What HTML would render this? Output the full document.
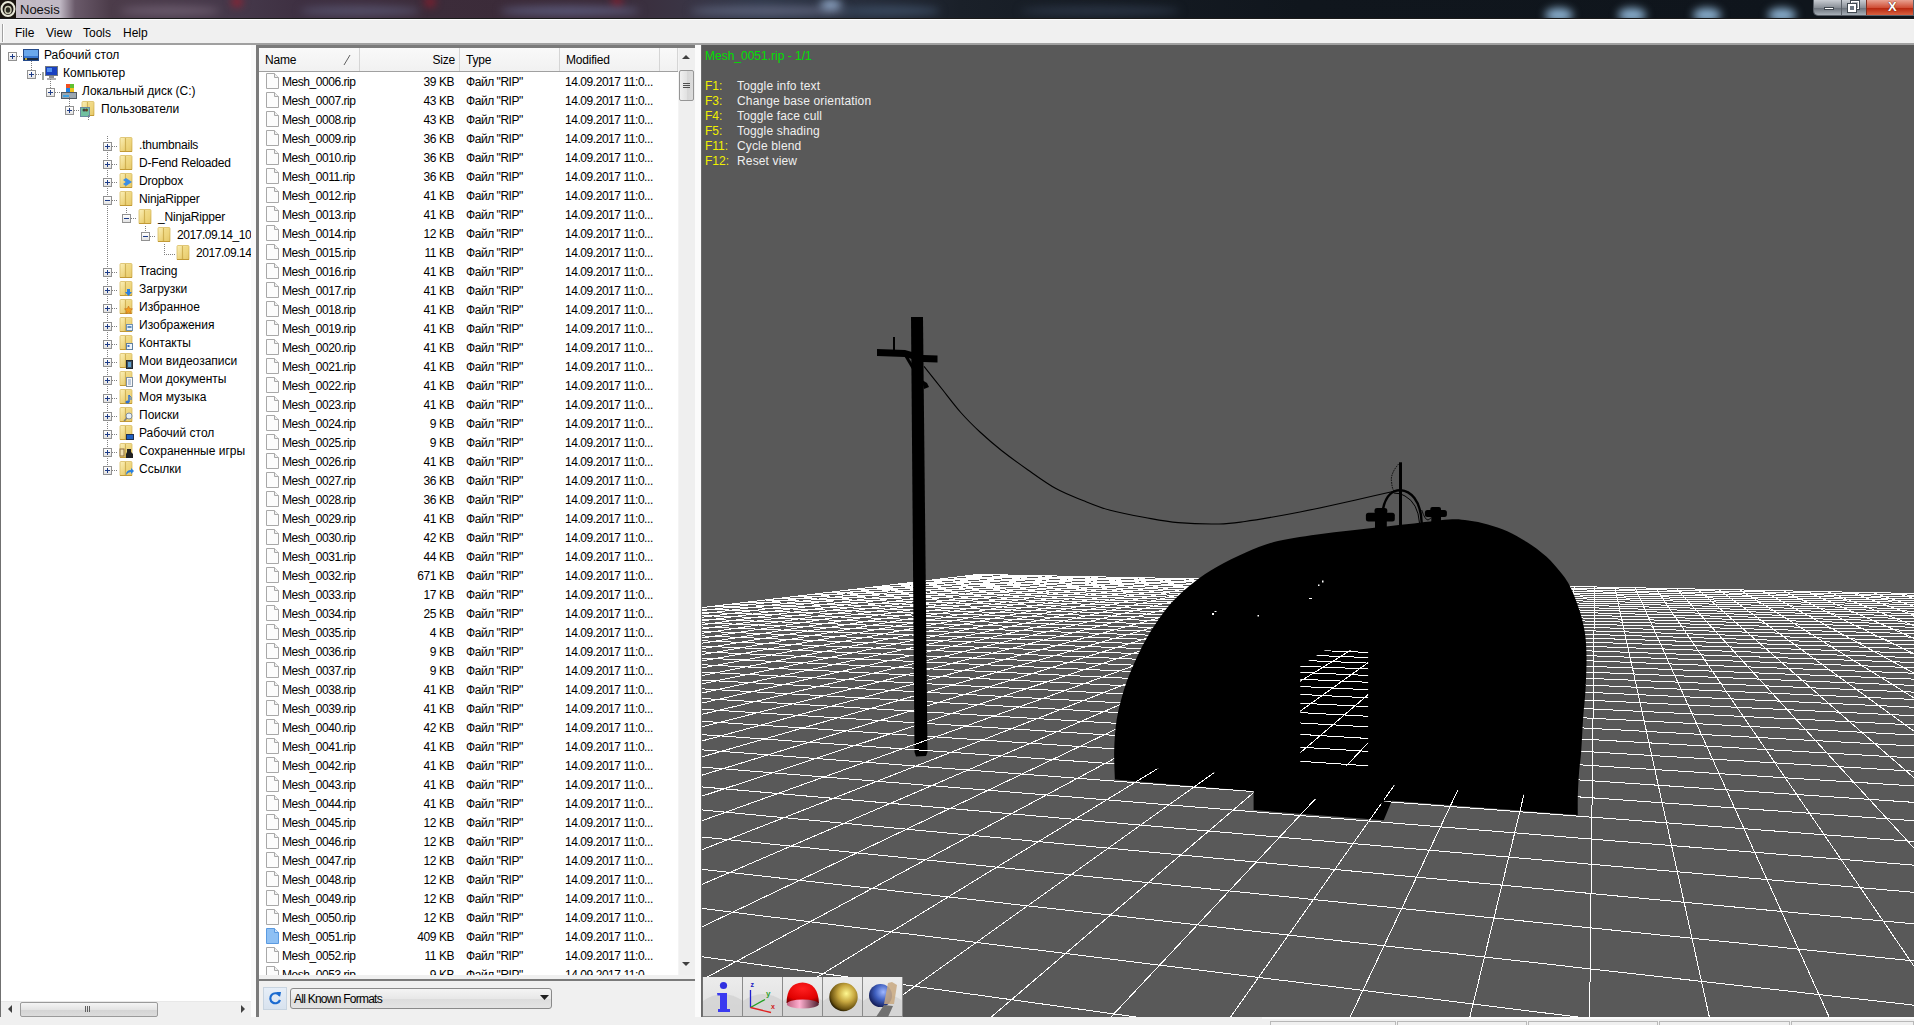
<!DOCTYPE html><html><head><meta charset="utf-8"><style>
*{margin:0;padding:0;box-sizing:border-box}
html,body{width:1914px;height:1025px;overflow:hidden;background:#f0f0f0;font-family:"Liberation Sans", sans-serif;}
.abs{position:absolute}
#title{left:0;top:0;width:1914px;height:19px;overflow:hidden;
background:linear-gradient(90deg,#1a1810 0px,#1a1810 15px,#c4bcc6 16px,#c0b8c4 60px,#6a5a6a 75px,#4c3c4a 110px,#45384a 240px,#3e3042 300px,#3c2c3a 430px,#3a2a38 600px,#3a3444 680px,#30384a 760px,#262c3a 860px,#1a2029 960px,#151b23 1100px,#10161d 1300px,#0f151c 1800px);}
.spot{position:absolute;border-radius:50%;filter:blur(4px)}
#menubar{left:0;top:19px;width:1914px;height:25px;background:#f0f0f0;border-top:1px solid #fbfbfb}
.menu{position:absolute;top:6px;font-size:12px;color:#000}
#tree{left:0;top:45px;width:256px;height:972px;background:#fff;border-left:1px solid #707070;overflow:hidden}
.ti{position:absolute;font-size:12px;color:#000;white-space:nowrap;line-height:14px;}
.pb{position:absolute;z-index:2;width:9px;height:9px;border:1px solid #919191;background:linear-gradient(#fff,#e3e3e3);}
.pb:before{content:"";position:absolute;left:1px;top:3px;width:5px;height:1px;background:#1d3b87}
.pb.p:after{content:"";position:absolute;left:3px;top:1px;width:1px;height:5px;background:#1d3b87}
.dv{position:absolute;width:1px;background-image:linear-gradient(#808080 50%,transparent 50%);background-size:1px 2px}
.dh{position:absolute;height:1px;background-image:linear-gradient(90deg,#808080 50%,transparent 50%);background-size:2px 1px}
#list{left:256px;top:45px;width:441px;height:936px;background:#fff;border:3px solid #7a7a7a;border-right:none;border-bottom:none;overflow:hidden}
.hd{position:absolute;top:0;height:24px;background:linear-gradient(#f7f7f7,#f0f0f0);border-bottom:1px solid #a0a0a0;font-size:12px;color:#000}
.hd span{position:absolute;top:6px}
.row{position:absolute;left:0;width:419px;height:19px;font-size:12px;color:#000;letter-spacing:-0.45px;white-space:nowrap}
.row span{position:absolute;top:3px}
.fi{position:absolute;left:7px;top:1px;width:13px;height:16px}
#view{left:702px;overflow:visible;top:45px;width:1212px;height:972px;background:#595959;overflow:hidden}
</style></head><body>

<div id="title" class="abs">
<div class="spot" style="left:232px;top:-2px;width:10px;height:8px;background:#b01828"></div>
<div class="spot" style="left:425px;top:-2px;width:10px;height:8px;background:#a01828"></div>
<div class="spot" style="left:612px;top:-2px;width:10px;height:8px;background:#a01828"></div>
<div class="spot" style="left:120px;top:6px;width:100px;height:10px;background:#6a5a6c"></div>
<div class="spot" style="left:300px;top:6px;width:120px;height:10px;background:#55506a"></div>
<div class="spot" style="left:500px;top:6px;width:140px;height:10px;background:#5a5878"></div>
<div class="spot" style="left:690px;top:6px;width:160px;height:10px;background:#5a6078"></div>
<div class="spot" style="left:820px;top:0px;width:22px;height:10px;background:#90a8c8"></div>
<div class="spot" style="left:840px;top:6px;width:100px;height:10px;background:#3a4a60"></div>
<div class="spot" style="left:1020px;top:6px;width:160px;height:10px;background:#2a3444"></div>
<div class="spot" style="left:1545px;top:8px;width:28px;height:14px;background:#8ab0d0"></div>
<div class="spot" style="left:1618px;top:8px;width:28px;height:14px;background:#8ab0d0"></div>
<div class="spot" style="left:1693px;top:8px;width:28px;height:14px;background:#8ab0d0"></div>
<div class="spot" style="left:1768px;top:8px;width:28px;height:14px;background:#8ab0d0"></div>
<div class="abs" style="left:0;top:0;width:16px;height:18px;background:#1a1510"></div>
<svg class="abs" style="left:0;top:1px" width="16" height="16"><ellipse cx="8" cy="8" rx="6.5" ry="7" fill="none" stroke="#e8e8d8" stroke-width="2"/><ellipse cx="8" cy="9" rx="3" ry="3.5" fill="#2a2a20" stroke="#c8c8b0" stroke-width="1.5"/></svg>
<div class="abs" style="left:20px;top:2px;font-size:13px;color:#101010">Noesis</div>
<div class="abs" style="left:1813px;top:0;width:101px;height:16px;border-radius:0 0 0 5px;overflow:hidden;border:1px solid #5a6068;border-top:none">
<div class="abs" style="left:0;top:0;width:27px;height:15px;background:linear-gradient(#c8ccd2,#8a9098 50%,#6c737c 55%,#a8b0b8)"></div>
<div class="abs" style="left:27px;top:0;width:25px;height:15px;background:linear-gradient(#c8ccd2,#8a9098 50%,#6c737c 55%,#a8b0b8);border-left:1px solid #5a6068"></div>
<div class="abs" style="left:52px;top:0;width:49px;height:15px;background:linear-gradient(#e8a090,#d05038 50%,#b82810 55%,#d86040);border-left:1px solid #803020"></div>
<div class="abs" style="left:10px;top:7px;width:10px;height:3px;background:#fff;border:1px solid #404850"></div>
<div class="abs" style="left:37px;top:1px;width:8px;height:8px;border:1px solid #fff;box-shadow:0 0 0 1px #404850"></div>
<div class="abs" style="left:34px;top:4px;width:8px;height:8px;border:2px solid #fff;background:#6a7480;box-shadow:0 0 0 1px #404850"></div>
<div class="abs" style="left:74px;top:-1px;font-size:13px;font-weight:bold;color:#fff;text-shadow:0 0 1px #602010,0 0 1px #602010">X</div>
</div>
<div class="abs" style="left:0;top:18px;width:1914px;height:1px;background:#1a1a1a"></div>
</div>
<div id="menubar" class="abs">
<div class="abs" style="left:2px;top:4px;width:2px;height:18px;border-left:1px solid #a0a0a0;border-right:1px solid #fff"></div>
<div class="menu" style="left:15px">File</div>
<div class="menu" style="left:46px">View</div>
<div class="menu" style="left:83px">Tools</div>
<div class="menu" style="left:123px">Help</div>
</div>
<div class="abs" style="left:0;top:43px;width:1914px;height:2px;background:#a0a0a0"></div>
<div id="tree" class="abs">
<div class="pb p" style="left:7px;top:7px"></div>
<div class="dh" style="left:16px;top:11px;width:6px"></div>
<div class="abs" style="left:22px;top:2px;width:16px;height:16px"><svg width="16" height="16"><rect x="0.5" y="2.5" width="15" height="11" fill="#3a78d0" stroke="#244a8a"/><rect x="1" y="3" width="14" height="6" fill="#6aa8ec"/><rect x="1" y="11" width="14" height="2" fill="#1a2a40"/><circle cx="3" cy="12" r="1" fill="#f0d040"/></svg></div>
<div class="ti" style="left:43px;top:3px;letter-spacing:0">Рабочий стол</div>
<div class="pb p" style="left:26px;top:25px"></div>
<div class="dh" style="left:35px;top:29px;width:6px"></div>
<div class="abs" style="left:41px;top:20px;width:16px;height:16px"><svg width="16" height="16"><rect x="3.5" y="1.5" width="12" height="9" fill="#1840c0" stroke="#707880"/><rect x="5" y="3" width="5" height="4" fill="#5090f0"/><rect x="7" y="11" width="5" height="2" fill="#909090"/><rect x="5" y="13" width="9" height="2" fill="#b0b0b0"/><rect x="0" y="7" width="2" height="8" fill="#a0a8a0"/></svg></div>
<div class="ti" style="left:62px;top:21px;letter-spacing:0">Компьютер</div>
<div class="pb p" style="left:45px;top:43px"></div>
<div class="dh" style="left:54px;top:47px;width:6px"></div>
<div class="abs" style="left:60px;top:38px;width:16px;height:16px"><svg width="16" height="16"><rect x="0.5" y="9.5" width="15" height="6" fill="#9aa6b0" stroke="#505a64"/><rect x="2" y="12" width="6" height="2" fill="#40a0e0"/><rect x="5" y="1" width="4" height="4" fill="#f05020"/><rect x="9" y="1" width="4" height="4" fill="#60c030"/><rect x="5" y="5" width="4" height="4" fill="#2080e0"/><rect x="9" y="5" width="4" height="4" fill="#f0c020"/></svg></div>
<div class="ti" style="left:81px;top:39px;letter-spacing:0">Локальный диск (C:)</div>
<div class="pb p" style="left:64px;top:61px"></div>
<div class="dh" style="left:73px;top:65px;width:6px"></div>
<div class="abs" style="left:79px;top:56px;width:16px;height:16px"><svg width="16" height="16" viewBox="0 0 16 16"><defs><linearGradient id="fg" x1="0" y1="0" x2="1" y2="1"><stop offset="0" stop-color="#fbf0b8"/><stop offset="0.6" stop-color="#ecd27a"/><stop offset="1" stop-color="#d4ae48"/></linearGradient></defs><path d="M2 1.5Q2 0.5 3 0.5H13Q14 0.5 14 1.5V14.5H2z" fill="url(#fg)" stroke="#d9bc62" stroke-width="0.8"/><path d="M7.5 1V14.5" stroke="#c9a848" stroke-width="1.2" opacity="0.8"/><path d="M8.5 2H13V14H8.5z" fill="#f0d880" opacity="0.6"/><path d="M2 14.5H14" stroke="#c29a36" stroke-width="1"/><rect x="0.5" y="6.5" width="9" height="9" fill="#70c0a0" stroke="#6a8aa0"/><circle cx="4" cy="9" r="1.5" fill="#404040"/><circle cx="6.5" cy="9" r="1.5" fill="#604020"/></svg></div>
<div class="ti" style="left:100px;top:57px;letter-spacing:0">Пользователи</div>
<div class="pb p" style="left:102px;top:97px"></div>
<div class="dh" style="left:111px;top:101px;width:6px"></div>
<div class="abs" style="left:117px;top:92px;width:16px;height:16px"><svg width="16" height="16" viewBox="0 0 16 16"><defs><linearGradient id="fg" x1="0" y1="0" x2="1" y2="1"><stop offset="0" stop-color="#fbf0b8"/><stop offset="0.6" stop-color="#ecd27a"/><stop offset="1" stop-color="#d4ae48"/></linearGradient></defs><path d="M2 1.5Q2 0.5 3 0.5H13Q14 0.5 14 1.5V14.5H2z" fill="url(#fg)" stroke="#d9bc62" stroke-width="0.8"/><path d="M7.5 1V14.5" stroke="#c9a848" stroke-width="1.2" opacity="0.8"/><path d="M8.5 2H13V14H8.5z" fill="#f0d880" opacity="0.6"/><path d="M2 14.5H14" stroke="#c29a36" stroke-width="1"/></svg></div>
<div class="ti" style="left:138px;top:93px;letter-spacing:-0.2px">.thumbnails</div>
<div class="pb p" style="left:102px;top:115px"></div>
<div class="dh" style="left:111px;top:119px;width:6px"></div>
<div class="abs" style="left:117px;top:110px;width:16px;height:16px"><svg width="16" height="16" viewBox="0 0 16 16"><defs><linearGradient id="fg" x1="0" y1="0" x2="1" y2="1"><stop offset="0" stop-color="#fbf0b8"/><stop offset="0.6" stop-color="#ecd27a"/><stop offset="1" stop-color="#d4ae48"/></linearGradient></defs><path d="M2 1.5Q2 0.5 3 0.5H13Q14 0.5 14 1.5V14.5H2z" fill="url(#fg)" stroke="#d9bc62" stroke-width="0.8"/><path d="M7.5 1V14.5" stroke="#c9a848" stroke-width="1.2" opacity="0.8"/><path d="M8.5 2H13V14H8.5z" fill="#f0d880" opacity="0.6"/><path d="M2 14.5H14" stroke="#c29a36" stroke-width="1"/></svg></div>
<div class="ti" style="left:138px;top:111px;letter-spacing:-0.2px">D-Fend Reloaded</div>
<div class="pb p" style="left:102px;top:133px"></div>
<div class="dh" style="left:111px;top:137px;width:6px"></div>
<div class="abs" style="left:117px;top:128px;width:16px;height:16px"><svg width="16" height="16" viewBox="0 0 16 16"><defs><linearGradient id="fg" x1="0" y1="0" x2="1" y2="1"><stop offset="0" stop-color="#fbf0b8"/><stop offset="0.6" stop-color="#ecd27a"/><stop offset="1" stop-color="#d4ae48"/></linearGradient></defs><path d="M2 1.5Q2 0.5 3 0.5H13Q14 0.5 14 1.5V14.5H2z" fill="url(#fg)" stroke="#d9bc62" stroke-width="0.8"/><path d="M7.5 1V14.5" stroke="#c9a848" stroke-width="1.2" opacity="0.8"/><path d="M8.5 2H13V14H8.5z" fill="#f0d880" opacity="0.6"/><path d="M2 14.5H14" stroke="#c29a36" stroke-width="1"/><path d="M5 7l3-2 3 2-3 2zM11 7l3 2-3 2-3-2zM5 11l3-2 3 2-3 2z" fill="#3a8ee8"/></svg></div>
<div class="ti" style="left:138px;top:129px;letter-spacing:-0.2px">Dropbox</div>
<div class="pb " style="left:102px;top:151px"></div>
<div class="dh" style="left:111px;top:155px;width:6px"></div>
<div class="abs" style="left:117px;top:146px;width:16px;height:16px"><svg width="16" height="16" viewBox="0 0 16 16"><defs><linearGradient id="fg" x1="0" y1="0" x2="1" y2="1"><stop offset="0" stop-color="#fbf0b8"/><stop offset="0.6" stop-color="#ecd27a"/><stop offset="1" stop-color="#d4ae48"/></linearGradient></defs><path d="M2 1.5Q2 0.5 3 0.5H13Q14 0.5 14 1.5V14.5H2z" fill="url(#fg)" stroke="#d9bc62" stroke-width="0.8"/><path d="M7.5 1V14.5" stroke="#c9a848" stroke-width="1.2" opacity="0.8"/><path d="M8.5 2H13V14H8.5z" fill="#f0d880" opacity="0.6"/><path d="M2 14.5H14" stroke="#c29a36" stroke-width="1"/></svg></div>
<div class="ti" style="left:138px;top:147px;letter-spacing:-0.2px">NinjaRipper</div>
<div class="pb " style="left:121px;top:169px"></div>
<div class="dh" style="left:130px;top:173px;width:6px"></div>
<div class="abs" style="left:136px;top:164px;width:16px;height:16px"><svg width="16" height="16" viewBox="0 0 16 16"><defs><linearGradient id="fg" x1="0" y1="0" x2="1" y2="1"><stop offset="0" stop-color="#fbf0b8"/><stop offset="0.6" stop-color="#ecd27a"/><stop offset="1" stop-color="#d4ae48"/></linearGradient></defs><path d="M2 1.5Q2 0.5 3 0.5H13Q14 0.5 14 1.5V14.5H2z" fill="url(#fg)" stroke="#d9bc62" stroke-width="0.8"/><path d="M7.5 1V14.5" stroke="#c9a848" stroke-width="1.2" opacity="0.8"/><path d="M8.5 2H13V14H8.5z" fill="#f0d880" opacity="0.6"/><path d="M2 14.5H14" stroke="#c29a36" stroke-width="1"/></svg></div>
<div class="ti" style="left:157px;top:165px;letter-spacing:-0.2px">_NinjaRipper</div>
<div class="pb " style="left:140px;top:187px"></div>
<div class="dh" style="left:149px;top:191px;width:6px"></div>
<div class="abs" style="left:155px;top:182px;width:16px;height:16px"><svg width="16" height="16" viewBox="0 0 16 16"><defs><linearGradient id="fg" x1="0" y1="0" x2="1" y2="1"><stop offset="0" stop-color="#fbf0b8"/><stop offset="0.6" stop-color="#ecd27a"/><stop offset="1" stop-color="#d4ae48"/></linearGradient></defs><path d="M2 1.5Q2 0.5 3 0.5H13Q14 0.5 14 1.5V14.5H2z" fill="url(#fg)" stroke="#d9bc62" stroke-width="0.8"/><path d="M7.5 1V14.5" stroke="#c9a848" stroke-width="1.2" opacity="0.8"/><path d="M8.5 2H13V14H8.5z" fill="#f0d880" opacity="0.6"/><path d="M2 14.5H14" stroke="#c29a36" stroke-width="1"/></svg></div>
<div class="ti" style="left:176px;top:183px;letter-spacing:-0.45px">2017.09.14_10.</div>
<div class="dh" style="left:163px;top:209px;width:11px"></div>
<div class="abs" style="left:174px;top:200px;width:16px;height:16px"><svg width="16" height="16" viewBox="0 0 16 16"><defs><linearGradient id="fg" x1="0" y1="0" x2="1" y2="1"><stop offset="0" stop-color="#fbf0b8"/><stop offset="0.6" stop-color="#ecd27a"/><stop offset="1" stop-color="#d4ae48"/></linearGradient></defs><path d="M2 1.5Q2 0.5 3 0.5H13Q14 0.5 14 1.5V14.5H2z" fill="url(#fg)" stroke="#d9bc62" stroke-width="0.8"/><path d="M7.5 1V14.5" stroke="#c9a848" stroke-width="1.2" opacity="0.8"/><path d="M8.5 2H13V14H8.5z" fill="#f0d880" opacity="0.6"/><path d="M2 14.5H14" stroke="#c29a36" stroke-width="1"/></svg></div>
<div class="ti" style="left:195px;top:201px;letter-spacing:-0.45px">2017.09.14_</div>
<div class="pb p" style="left:102px;top:223px"></div>
<div class="dh" style="left:111px;top:227px;width:6px"></div>
<div class="abs" style="left:117px;top:218px;width:16px;height:16px"><svg width="16" height="16" viewBox="0 0 16 16"><defs><linearGradient id="fg" x1="0" y1="0" x2="1" y2="1"><stop offset="0" stop-color="#fbf0b8"/><stop offset="0.6" stop-color="#ecd27a"/><stop offset="1" stop-color="#d4ae48"/></linearGradient></defs><path d="M2 1.5Q2 0.5 3 0.5H13Q14 0.5 14 1.5V14.5H2z" fill="url(#fg)" stroke="#d9bc62" stroke-width="0.8"/><path d="M7.5 1V14.5" stroke="#c9a848" stroke-width="1.2" opacity="0.8"/><path d="M8.5 2H13V14H8.5z" fill="#f0d880" opacity="0.6"/><path d="M2 14.5H14" stroke="#c29a36" stroke-width="1"/></svg></div>
<div class="ti" style="left:138px;top:219px;letter-spacing:-0.2px">Tracing</div>
<div class="pb p" style="left:102px;top:241px"></div>
<div class="dh" style="left:111px;top:245px;width:6px"></div>
<div class="abs" style="left:117px;top:236px;width:16px;height:16px"><svg width="16" height="16" viewBox="0 0 16 16"><defs><linearGradient id="fg" x1="0" y1="0" x2="1" y2="1"><stop offset="0" stop-color="#fbf0b8"/><stop offset="0.6" stop-color="#ecd27a"/><stop offset="1" stop-color="#d4ae48"/></linearGradient></defs><path d="M2 1.5Q2 0.5 3 0.5H13Q14 0.5 14 1.5V14.5H2z" fill="url(#fg)" stroke="#d9bc62" stroke-width="0.8"/><path d="M7.5 1V14.5" stroke="#c9a848" stroke-width="1.2" opacity="0.8"/><path d="M8.5 2H13V14H8.5z" fill="#f0d880" opacity="0.6"/><path d="M2 14.5H14" stroke="#c29a36" stroke-width="1"/><path d="M9 8h3v3h2l-3.5 4-3.5-4h2z" fill="#2a80e0"/></svg></div>
<div class="ti" style="left:138px;top:237px;letter-spacing:0">Загрузки</div>
<div class="pb p" style="left:102px;top:259px"></div>
<div class="dh" style="left:111px;top:263px;width:6px"></div>
<div class="abs" style="left:117px;top:254px;width:16px;height:16px"><svg width="16" height="16" viewBox="0 0 16 16"><defs><linearGradient id="fg" x1="0" y1="0" x2="1" y2="1"><stop offset="0" stop-color="#fbf0b8"/><stop offset="0.6" stop-color="#ecd27a"/><stop offset="1" stop-color="#d4ae48"/></linearGradient></defs><path d="M2 1.5Q2 0.5 3 0.5H13Q14 0.5 14 1.5V14.5H2z" fill="url(#fg)" stroke="#d9bc62" stroke-width="0.8"/><path d="M7.5 1V14.5" stroke="#c9a848" stroke-width="1.2" opacity="0.8"/><path d="M8.5 2H13V14H8.5z" fill="#f0d880" opacity="0.6"/><path d="M2 14.5H14" stroke="#c29a36" stroke-width="1"/><path d="M10.5 7l1.2 2.6 2.8.3-2.1 1.9.6 2.8-2.5-1.4-2.5 1.4.6-2.8-2.1-1.9 2.8-.3z" fill="#f0a020" stroke="#c06010" stroke-width="0.5"/></svg></div>
<div class="ti" style="left:138px;top:255px;letter-spacing:0">Избранное</div>
<div class="pb p" style="left:102px;top:277px"></div>
<div class="dh" style="left:111px;top:281px;width:6px"></div>
<div class="abs" style="left:117px;top:272px;width:16px;height:16px"><svg width="16" height="16" viewBox="0 0 16 16"><defs><linearGradient id="fg" x1="0" y1="0" x2="1" y2="1"><stop offset="0" stop-color="#fbf0b8"/><stop offset="0.6" stop-color="#ecd27a"/><stop offset="1" stop-color="#d4ae48"/></linearGradient></defs><path d="M2 1.5Q2 0.5 3 0.5H13Q14 0.5 14 1.5V14.5H2z" fill="url(#fg)" stroke="#d9bc62" stroke-width="0.8"/><path d="M7.5 1V14.5" stroke="#c9a848" stroke-width="1.2" opacity="0.8"/><path d="M8.5 2H13V14H8.5z" fill="#f0d880" opacity="0.6"/><path d="M2 14.5H14" stroke="#c29a36" stroke-width="1"/><rect x="8.5" y="7.5" width="6" height="6" fill="#e8f0f8" stroke="#7090b0"/><rect x="9.5" y="9" width="4" height="2" fill="#6090c0"/></svg></div>
<div class="ti" style="left:138px;top:273px;letter-spacing:0">Изображения</div>
<div class="pb p" style="left:102px;top:295px"></div>
<div class="dh" style="left:111px;top:299px;width:6px"></div>
<div class="abs" style="left:117px;top:290px;width:16px;height:16px"><svg width="16" height="16" viewBox="0 0 16 16"><defs><linearGradient id="fg" x1="0" y1="0" x2="1" y2="1"><stop offset="0" stop-color="#fbf0b8"/><stop offset="0.6" stop-color="#ecd27a"/><stop offset="1" stop-color="#d4ae48"/></linearGradient></defs><path d="M2 1.5Q2 0.5 3 0.5H13Q14 0.5 14 1.5V14.5H2z" fill="url(#fg)" stroke="#d9bc62" stroke-width="0.8"/><path d="M7.5 1V14.5" stroke="#c9a848" stroke-width="1.2" opacity="0.8"/><path d="M8.5 2H13V14H8.5z" fill="#f0d880" opacity="0.6"/><path d="M2 14.5H14" stroke="#c29a36" stroke-width="1"/><rect x="8.5" y="8.5" width="6" height="6" fill="#f0f4f8" stroke="#6080a0"/><rect x="9.5" y="10" width="2" height="2" fill="#4070c0"/></svg></div>
<div class="ti" style="left:138px;top:291px;letter-spacing:0">Контакты</div>
<div class="pb p" style="left:102px;top:313px"></div>
<div class="dh" style="left:111px;top:317px;width:6px"></div>
<div class="abs" style="left:117px;top:308px;width:16px;height:16px"><svg width="16" height="16" viewBox="0 0 16 16"><defs><linearGradient id="fg" x1="0" y1="0" x2="1" y2="1"><stop offset="0" stop-color="#fbf0b8"/><stop offset="0.6" stop-color="#ecd27a"/><stop offset="1" stop-color="#d4ae48"/></linearGradient></defs><path d="M2 1.5Q2 0.5 3 0.5H13Q14 0.5 14 1.5V14.5H2z" fill="url(#fg)" stroke="#d9bc62" stroke-width="0.8"/><path d="M7.5 1V14.5" stroke="#c9a848" stroke-width="1.2" opacity="0.8"/><path d="M8.5 2H13V14H8.5z" fill="#f0d880" opacity="0.6"/><path d="M2 14.5H14" stroke="#c29a36" stroke-width="1"/><rect x="8.5" y="7.5" width="6" height="8" fill="#405060" stroke="#202830"/><rect x="10" y="9" width="3" height="5" fill="#60a0d0"/></svg></div>
<div class="ti" style="left:138px;top:309px;letter-spacing:0">Мои видеозаписи</div>
<div class="pb p" style="left:102px;top:331px"></div>
<div class="dh" style="left:111px;top:335px;width:6px"></div>
<div class="abs" style="left:117px;top:326px;width:16px;height:16px"><svg width="16" height="16" viewBox="0 0 16 16"><defs><linearGradient id="fg" x1="0" y1="0" x2="1" y2="1"><stop offset="0" stop-color="#fbf0b8"/><stop offset="0.6" stop-color="#ecd27a"/><stop offset="1" stop-color="#d4ae48"/></linearGradient></defs><path d="M2 1.5Q2 0.5 3 0.5H13Q14 0.5 14 1.5V14.5H2z" fill="url(#fg)" stroke="#d9bc62" stroke-width="0.8"/><path d="M7.5 1V14.5" stroke="#c9a848" stroke-width="1.2" opacity="0.8"/><path d="M8.5 2H13V14H8.5z" fill="#f0d880" opacity="0.6"/><path d="M2 14.5H14" stroke="#c29a36" stroke-width="1"/><rect x="8.5" y="6.5" width="6" height="9" fill="#f8f8f8" stroke="#8090a0"/><path d="M10 9h3M10 11h3M10 13h3" stroke="#6080b0" stroke-width="0.8"/></svg></div>
<div class="ti" style="left:138px;top:327px;letter-spacing:0">Мои документы</div>
<div class="pb p" style="left:102px;top:349px"></div>
<div class="dh" style="left:111px;top:353px;width:6px"></div>
<div class="abs" style="left:117px;top:344px;width:16px;height:16px"><svg width="16" height="16" viewBox="0 0 16 16"><defs><linearGradient id="fg" x1="0" y1="0" x2="1" y2="1"><stop offset="0" stop-color="#fbf0b8"/><stop offset="0.6" stop-color="#ecd27a"/><stop offset="1" stop-color="#d4ae48"/></linearGradient></defs><path d="M2 1.5Q2 0.5 3 0.5H13Q14 0.5 14 1.5V14.5H2z" fill="url(#fg)" stroke="#d9bc62" stroke-width="0.8"/><path d="M7.5 1V14.5" stroke="#c9a848" stroke-width="1.2" opacity="0.8"/><path d="M8.5 2H13V14H8.5z" fill="#f0d880" opacity="0.6"/><path d="M2 14.5H14" stroke="#c29a36" stroke-width="1"/><path d="M11 6v7" stroke="#3070d0" stroke-width="1.5"/><ellipse cx="9.5" cy="13" rx="2" ry="1.5" fill="#3070d0"/><path d="M11 6q3 2 2 5" stroke="#3070d0" fill="none"/></svg></div>
<div class="ti" style="left:138px;top:345px;letter-spacing:0">Моя музыка</div>
<div class="pb p" style="left:102px;top:367px"></div>
<div class="dh" style="left:111px;top:371px;width:6px"></div>
<div class="abs" style="left:117px;top:362px;width:16px;height:16px"><svg width="16" height="16" viewBox="0 0 16 16"><defs><linearGradient id="fg" x1="0" y1="0" x2="1" y2="1"><stop offset="0" stop-color="#fbf0b8"/><stop offset="0.6" stop-color="#ecd27a"/><stop offset="1" stop-color="#d4ae48"/></linearGradient></defs><path d="M2 1.5Q2 0.5 3 0.5H13Q14 0.5 14 1.5V14.5H2z" fill="url(#fg)" stroke="#d9bc62" stroke-width="0.8"/><path d="M7.5 1V14.5" stroke="#c9a848" stroke-width="1.2" opacity="0.8"/><path d="M8.5 2H13V14H8.5z" fill="#f0d880" opacity="0.6"/><path d="M2 14.5H14" stroke="#c29a36" stroke-width="1"/><circle cx="11" cy="9" r="3" fill="#e8f0f8" stroke="#8090a0"/><path d="M9 11l-3 3" stroke="#808080" stroke-width="1.5"/></svg></div>
<div class="ti" style="left:138px;top:363px;letter-spacing:0">Поиски</div>
<div class="pb p" style="left:102px;top:385px"></div>
<div class="dh" style="left:111px;top:389px;width:6px"></div>
<div class="abs" style="left:117px;top:380px;width:16px;height:16px"><svg width="16" height="16" viewBox="0 0 16 16"><defs><linearGradient id="fg" x1="0" y1="0" x2="1" y2="1"><stop offset="0" stop-color="#fbf0b8"/><stop offset="0.6" stop-color="#ecd27a"/><stop offset="1" stop-color="#d4ae48"/></linearGradient></defs><path d="M2 1.5Q2 0.5 3 0.5H13Q14 0.5 14 1.5V14.5H2z" fill="url(#fg)" stroke="#d9bc62" stroke-width="0.8"/><path d="M7.5 1V14.5" stroke="#c9a848" stroke-width="1.2" opacity="0.8"/><path d="M8.5 2H13V14H8.5z" fill="#f0d880" opacity="0.6"/><path d="M2 14.5H14" stroke="#c29a36" stroke-width="1"/><rect x="8.5" y="9.5" width="7" height="5" fill="#2060c0" stroke="#203050"/></svg></div>
<div class="ti" style="left:138px;top:381px;letter-spacing:0">Рабочий стол</div>
<div class="pb p" style="left:102px;top:403px"></div>
<div class="dh" style="left:111px;top:407px;width:6px"></div>
<div class="abs" style="left:117px;top:398px;width:16px;height:16px"><svg width="16" height="16" viewBox="0 0 16 16"><defs><linearGradient id="fg" x1="0" y1="0" x2="1" y2="1"><stop offset="0" stop-color="#fbf0b8"/><stop offset="0.6" stop-color="#ecd27a"/><stop offset="1" stop-color="#d4ae48"/></linearGradient></defs><path d="M2 1.5Q2 0.5 3 0.5H13Q14 0.5 14 1.5V14.5H2z" fill="url(#fg)" stroke="#d9bc62" stroke-width="0.8"/><path d="M7.5 1V14.5" stroke="#c9a848" stroke-width="1.2" opacity="0.8"/><path d="M8.5 2H13V14H8.5z" fill="#f0d880" opacity="0.6"/><path d="M2 14.5H14" stroke="#c29a36" stroke-width="1"/><path d="M9 6h4v3l2 2v4H8v-4l1-2z" fill="#202020"/><rect x="2" y="6" width="4" height="7" fill="#f0e0b0" stroke="#907040"/></svg></div>
<div class="ti" style="left:138px;top:399px;letter-spacing:0">Сохраненные игры</div>
<div class="pb p" style="left:102px;top:421px"></div>
<div class="dh" style="left:111px;top:425px;width:6px"></div>
<div class="abs" style="left:117px;top:416px;width:16px;height:16px"><svg width="16" height="16" viewBox="0 0 16 16"><defs><linearGradient id="fg" x1="0" y1="0" x2="1" y2="1"><stop offset="0" stop-color="#fbf0b8"/><stop offset="0.6" stop-color="#ecd27a"/><stop offset="1" stop-color="#d4ae48"/></linearGradient></defs><path d="M2 1.5Q2 0.5 3 0.5H13Q14 0.5 14 1.5V14.5H2z" fill="url(#fg)" stroke="#d9bc62" stroke-width="0.8"/><path d="M7.5 1V14.5" stroke="#c9a848" stroke-width="1.2" opacity="0.8"/><path d="M8.5 2H13V14H8.5z" fill="#f0d880" opacity="0.6"/><path d="M2 14.5H14" stroke="#c29a36" stroke-width="1"/><path d="M8 14q0-5 5-5v-2l3 3-3 3v-2q-3 0-5 3z" fill="#2a80e0"/></svg></div>
<div class="ti" style="left:138px;top:417px;letter-spacing:0">Ссылки</div>
<div class="dv" style="left:30px;top:16px;height:9px"></div>
<div class="dv" style="left:49px;top:34px;height:9px"></div>
<div class="dv" style="left:68px;top:52px;height:9px"></div>
<div class="dv" style="left:87px;top:70px;height:6px"></div>
<div class="dv" style="left:106px;top:91px;height:334px"></div>
<div class="dv" style="left:125px;top:163px;height:10px"></div>
<div class="dv" style="left:144px;top:181px;height:10px"></div>
<div class="dv" style="left:163px;top:199px;height:10px"></div>
<div class="abs" style="left:0;top:956px;width:255px;height:17px;background:#f0f0f0;border-top:1px solid #e8e8e8"></div>
<div class="abs" style="left:19px;top:957px;width:138px;height:15px;border:1px solid #9a9a9a;border-radius:2px;background:linear-gradient(#f4f4f4,#e4e4e4 50%,#d4d4d4 51%,#dcdcdc)"></div>
<div class="abs" style="left:84px;top:961px;width:1px;height:6px;background:#606060;box-shadow:2px 0 #606060,4px 0 #606060"></div>
<svg class="abs" style="left:6px;top:960px" width="6" height="8"><path d="M5 0v8L1 4z" fill="#404040"/></svg>
<svg class="abs" style="left:239px;top:960px" width="6" height="8"><path d="M1 0v8L5 4z" fill="#404040"/></svg>
</div>
<div class="abs" style="left:251px;top:45px;width:5px;height:972px;background:#fafafa"></div>
<div class="abs" style="left:256px;top:45px;width:3px;height:972px;background:#7a7a7a"></div>
<div class="abs" style="left:256px;top:45px;width:441px;height:3px;background:#7a7a7a"></div>
<div class="abs" style="left:259px;top:48px;width:436px;height:927px;background:#fff;overflow:hidden">
<div class="hd" style="left:0;width:419px"></div>
<div class="abs" style="left:0px;top:0;width:101px;height:23px;border-right:1px solid #d5d5d5;background:linear-gradient(#f9f9f9,#f1f1f1)"></div>
<div class="abs" style="left:6px;top:5px;font-size:12px;letter-spacing:-0.2px">Name</div>
<div class="abs" style="left:101px;top:0;width:100px;height:23px;border-right:1px solid #d5d5d5;background:linear-gradient(#f9f9f9,#f1f1f1)"></div>
<div class="abs" style="left:101px;width:95px;text-align:right;top:5px;font-size:12px;letter-spacing:-0.2px">Size</div>
<div class="abs" style="left:201px;top:0;width:100px;height:23px;border-right:1px solid #d5d5d5;background:linear-gradient(#f9f9f9,#f1f1f1)"></div>
<div class="abs" style="left:207px;top:5px;font-size:12px;letter-spacing:-0.2px">Type</div>
<div class="abs" style="left:301px;top:0;width:100px;height:23px;border-right:1px solid #d5d5d5;background:linear-gradient(#f9f9f9,#f1f1f1)"></div>
<div class="abs" style="left:307px;top:5px;font-size:12px;letter-spacing:-0.2px">Modified</div>
<div class="abs" style="left:401px;top:0;width:18px;height:23px;border-right:1px solid #d5d5d5;background:linear-gradient(#f9f9f9,#f1f1f1)"></div>
<div class="abs" style="left:0;top:23px;width:419px;height:1px;background:#a0a0a0"></div>
<svg class="abs" style="left:83px;top:6px" width="10" height="12"><path d="M8 1L2 11" stroke="#606060" stroke-width="1"/></svg>
<div class="row" style="top:24px"><svg class="fi" width="13" height="16"><path d="M0.5 0.5h8l4 4v11h-12z" fill="#fcfcfc" stroke="#a8a8a8"/><path d="M8.5 0.5v4h4" fill="#f0f0f0" stroke="#a8a8a8"/></svg><span style="left:23px">Mesh_0006.rip</span><span style="left:100px;width:95px;text-align:right">39 KB</span><span style="left:207px">Файл "RIP"</span><span style="left:306px">14.09.2017 11:0...</span></div>
<div class="row" style="top:43px"><svg class="fi" width="13" height="16"><path d="M0.5 0.5h8l4 4v11h-12z" fill="#fcfcfc" stroke="#a8a8a8"/><path d="M8.5 0.5v4h4" fill="#f0f0f0" stroke="#a8a8a8"/></svg><span style="left:23px">Mesh_0007.rip</span><span style="left:100px;width:95px;text-align:right">43 KB</span><span style="left:207px">Файл "RIP"</span><span style="left:306px">14.09.2017 11:0...</span></div>
<div class="row" style="top:62px"><svg class="fi" width="13" height="16"><path d="M0.5 0.5h8l4 4v11h-12z" fill="#fcfcfc" stroke="#a8a8a8"/><path d="M8.5 0.5v4h4" fill="#f0f0f0" stroke="#a8a8a8"/></svg><span style="left:23px">Mesh_0008.rip</span><span style="left:100px;width:95px;text-align:right">43 KB</span><span style="left:207px">Файл "RIP"</span><span style="left:306px">14.09.2017 11:0...</span></div>
<div class="row" style="top:81px"><svg class="fi" width="13" height="16"><path d="M0.5 0.5h8l4 4v11h-12z" fill="#fcfcfc" stroke="#a8a8a8"/><path d="M8.5 0.5v4h4" fill="#f0f0f0" stroke="#a8a8a8"/></svg><span style="left:23px">Mesh_0009.rip</span><span style="left:100px;width:95px;text-align:right">36 KB</span><span style="left:207px">Файл "RIP"</span><span style="left:306px">14.09.2017 11:0...</span></div>
<div class="row" style="top:100px"><svg class="fi" width="13" height="16"><path d="M0.5 0.5h8l4 4v11h-12z" fill="#fcfcfc" stroke="#a8a8a8"/><path d="M8.5 0.5v4h4" fill="#f0f0f0" stroke="#a8a8a8"/></svg><span style="left:23px">Mesh_0010.rip</span><span style="left:100px;width:95px;text-align:right">36 KB</span><span style="left:207px">Файл "RIP"</span><span style="left:306px">14.09.2017 11:0...</span></div>
<div class="row" style="top:119px"><svg class="fi" width="13" height="16"><path d="M0.5 0.5h8l4 4v11h-12z" fill="#fcfcfc" stroke="#a8a8a8"/><path d="M8.5 0.5v4h4" fill="#f0f0f0" stroke="#a8a8a8"/></svg><span style="left:23px">Mesh_0011.rip</span><span style="left:100px;width:95px;text-align:right">36 KB</span><span style="left:207px">Файл "RIP"</span><span style="left:306px">14.09.2017 11:0...</span></div>
<div class="row" style="top:138px"><svg class="fi" width="13" height="16"><path d="M0.5 0.5h8l4 4v11h-12z" fill="#fcfcfc" stroke="#a8a8a8"/><path d="M8.5 0.5v4h4" fill="#f0f0f0" stroke="#a8a8a8"/></svg><span style="left:23px">Mesh_0012.rip</span><span style="left:100px;width:95px;text-align:right">41 KB</span><span style="left:207px">Файл "RIP"</span><span style="left:306px">14.09.2017 11:0...</span></div>
<div class="row" style="top:157px"><svg class="fi" width="13" height="16"><path d="M0.5 0.5h8l4 4v11h-12z" fill="#fcfcfc" stroke="#a8a8a8"/><path d="M8.5 0.5v4h4" fill="#f0f0f0" stroke="#a8a8a8"/></svg><span style="left:23px">Mesh_0013.rip</span><span style="left:100px;width:95px;text-align:right">41 KB</span><span style="left:207px">Файл "RIP"</span><span style="left:306px">14.09.2017 11:0...</span></div>
<div class="row" style="top:176px"><svg class="fi" width="13" height="16"><path d="M0.5 0.5h8l4 4v11h-12z" fill="#fcfcfc" stroke="#a8a8a8"/><path d="M8.5 0.5v4h4" fill="#f0f0f0" stroke="#a8a8a8"/></svg><span style="left:23px">Mesh_0014.rip</span><span style="left:100px;width:95px;text-align:right">12 KB</span><span style="left:207px">Файл "RIP"</span><span style="left:306px">14.09.2017 11:0...</span></div>
<div class="row" style="top:195px"><svg class="fi" width="13" height="16"><path d="M0.5 0.5h8l4 4v11h-12z" fill="#fcfcfc" stroke="#a8a8a8"/><path d="M8.5 0.5v4h4" fill="#f0f0f0" stroke="#a8a8a8"/></svg><span style="left:23px">Mesh_0015.rip</span><span style="left:100px;width:95px;text-align:right">11 KB</span><span style="left:207px">Файл "RIP"</span><span style="left:306px">14.09.2017 11:0...</span></div>
<div class="row" style="top:214px"><svg class="fi" width="13" height="16"><path d="M0.5 0.5h8l4 4v11h-12z" fill="#fcfcfc" stroke="#a8a8a8"/><path d="M8.5 0.5v4h4" fill="#f0f0f0" stroke="#a8a8a8"/></svg><span style="left:23px">Mesh_0016.rip</span><span style="left:100px;width:95px;text-align:right">41 KB</span><span style="left:207px">Файл "RIP"</span><span style="left:306px">14.09.2017 11:0...</span></div>
<div class="row" style="top:233px"><svg class="fi" width="13" height="16"><path d="M0.5 0.5h8l4 4v11h-12z" fill="#fcfcfc" stroke="#a8a8a8"/><path d="M8.5 0.5v4h4" fill="#f0f0f0" stroke="#a8a8a8"/></svg><span style="left:23px">Mesh_0017.rip</span><span style="left:100px;width:95px;text-align:right">41 KB</span><span style="left:207px">Файл "RIP"</span><span style="left:306px">14.09.2017 11:0...</span></div>
<div class="row" style="top:252px"><svg class="fi" width="13" height="16"><path d="M0.5 0.5h8l4 4v11h-12z" fill="#fcfcfc" stroke="#a8a8a8"/><path d="M8.5 0.5v4h4" fill="#f0f0f0" stroke="#a8a8a8"/></svg><span style="left:23px">Mesh_0018.rip</span><span style="left:100px;width:95px;text-align:right">41 KB</span><span style="left:207px">Файл "RIP"</span><span style="left:306px">14.09.2017 11:0...</span></div>
<div class="row" style="top:271px"><svg class="fi" width="13" height="16"><path d="M0.5 0.5h8l4 4v11h-12z" fill="#fcfcfc" stroke="#a8a8a8"/><path d="M8.5 0.5v4h4" fill="#f0f0f0" stroke="#a8a8a8"/></svg><span style="left:23px">Mesh_0019.rip</span><span style="left:100px;width:95px;text-align:right">41 KB</span><span style="left:207px">Файл "RIP"</span><span style="left:306px">14.09.2017 11:0...</span></div>
<div class="row" style="top:290px"><svg class="fi" width="13" height="16"><path d="M0.5 0.5h8l4 4v11h-12z" fill="#fcfcfc" stroke="#a8a8a8"/><path d="M8.5 0.5v4h4" fill="#f0f0f0" stroke="#a8a8a8"/></svg><span style="left:23px">Mesh_0020.rip</span><span style="left:100px;width:95px;text-align:right">41 KB</span><span style="left:207px">Файл "RIP"</span><span style="left:306px">14.09.2017 11:0...</span></div>
<div class="row" style="top:309px"><svg class="fi" width="13" height="16"><path d="M0.5 0.5h8l4 4v11h-12z" fill="#fcfcfc" stroke="#a8a8a8"/><path d="M8.5 0.5v4h4" fill="#f0f0f0" stroke="#a8a8a8"/></svg><span style="left:23px">Mesh_0021.rip</span><span style="left:100px;width:95px;text-align:right">41 KB</span><span style="left:207px">Файл "RIP"</span><span style="left:306px">14.09.2017 11:0...</span></div>
<div class="row" style="top:328px"><svg class="fi" width="13" height="16"><path d="M0.5 0.5h8l4 4v11h-12z" fill="#fcfcfc" stroke="#a8a8a8"/><path d="M8.5 0.5v4h4" fill="#f0f0f0" stroke="#a8a8a8"/></svg><span style="left:23px">Mesh_0022.rip</span><span style="left:100px;width:95px;text-align:right">41 KB</span><span style="left:207px">Файл "RIP"</span><span style="left:306px">14.09.2017 11:0...</span></div>
<div class="row" style="top:347px"><svg class="fi" width="13" height="16"><path d="M0.5 0.5h8l4 4v11h-12z" fill="#fcfcfc" stroke="#a8a8a8"/><path d="M8.5 0.5v4h4" fill="#f0f0f0" stroke="#a8a8a8"/></svg><span style="left:23px">Mesh_0023.rip</span><span style="left:100px;width:95px;text-align:right">41 KB</span><span style="left:207px">Файл "RIP"</span><span style="left:306px">14.09.2017 11:0...</span></div>
<div class="row" style="top:366px"><svg class="fi" width="13" height="16"><path d="M0.5 0.5h8l4 4v11h-12z" fill="#fcfcfc" stroke="#a8a8a8"/><path d="M8.5 0.5v4h4" fill="#f0f0f0" stroke="#a8a8a8"/></svg><span style="left:23px">Mesh_0024.rip</span><span style="left:100px;width:95px;text-align:right">9 KB</span><span style="left:207px">Файл "RIP"</span><span style="left:306px">14.09.2017 11:0...</span></div>
<div class="row" style="top:385px"><svg class="fi" width="13" height="16"><path d="M0.5 0.5h8l4 4v11h-12z" fill="#fcfcfc" stroke="#a8a8a8"/><path d="M8.5 0.5v4h4" fill="#f0f0f0" stroke="#a8a8a8"/></svg><span style="left:23px">Mesh_0025.rip</span><span style="left:100px;width:95px;text-align:right">9 KB</span><span style="left:207px">Файл "RIP"</span><span style="left:306px">14.09.2017 11:0...</span></div>
<div class="row" style="top:404px"><svg class="fi" width="13" height="16"><path d="M0.5 0.5h8l4 4v11h-12z" fill="#fcfcfc" stroke="#a8a8a8"/><path d="M8.5 0.5v4h4" fill="#f0f0f0" stroke="#a8a8a8"/></svg><span style="left:23px">Mesh_0026.rip</span><span style="left:100px;width:95px;text-align:right">41 KB</span><span style="left:207px">Файл "RIP"</span><span style="left:306px">14.09.2017 11:0...</span></div>
<div class="row" style="top:423px"><svg class="fi" width="13" height="16"><path d="M0.5 0.5h8l4 4v11h-12z" fill="#fcfcfc" stroke="#a8a8a8"/><path d="M8.5 0.5v4h4" fill="#f0f0f0" stroke="#a8a8a8"/></svg><span style="left:23px">Mesh_0027.rip</span><span style="left:100px;width:95px;text-align:right">36 KB</span><span style="left:207px">Файл "RIP"</span><span style="left:306px">14.09.2017 11:0...</span></div>
<div class="row" style="top:442px"><svg class="fi" width="13" height="16"><path d="M0.5 0.5h8l4 4v11h-12z" fill="#fcfcfc" stroke="#a8a8a8"/><path d="M8.5 0.5v4h4" fill="#f0f0f0" stroke="#a8a8a8"/></svg><span style="left:23px">Mesh_0028.rip</span><span style="left:100px;width:95px;text-align:right">36 KB</span><span style="left:207px">Файл "RIP"</span><span style="left:306px">14.09.2017 11:0...</span></div>
<div class="row" style="top:461px"><svg class="fi" width="13" height="16"><path d="M0.5 0.5h8l4 4v11h-12z" fill="#fcfcfc" stroke="#a8a8a8"/><path d="M8.5 0.5v4h4" fill="#f0f0f0" stroke="#a8a8a8"/></svg><span style="left:23px">Mesh_0029.rip</span><span style="left:100px;width:95px;text-align:right">41 KB</span><span style="left:207px">Файл "RIP"</span><span style="left:306px">14.09.2017 11:0...</span></div>
<div class="row" style="top:480px"><svg class="fi" width="13" height="16"><path d="M0.5 0.5h8l4 4v11h-12z" fill="#fcfcfc" stroke="#a8a8a8"/><path d="M8.5 0.5v4h4" fill="#f0f0f0" stroke="#a8a8a8"/></svg><span style="left:23px">Mesh_0030.rip</span><span style="left:100px;width:95px;text-align:right">42 KB</span><span style="left:207px">Файл "RIP"</span><span style="left:306px">14.09.2017 11:0...</span></div>
<div class="row" style="top:499px"><svg class="fi" width="13" height="16"><path d="M0.5 0.5h8l4 4v11h-12z" fill="#fcfcfc" stroke="#a8a8a8"/><path d="M8.5 0.5v4h4" fill="#f0f0f0" stroke="#a8a8a8"/></svg><span style="left:23px">Mesh_0031.rip</span><span style="left:100px;width:95px;text-align:right">44 KB</span><span style="left:207px">Файл "RIP"</span><span style="left:306px">14.09.2017 11:0...</span></div>
<div class="row" style="top:518px"><svg class="fi" width="13" height="16"><path d="M0.5 0.5h8l4 4v11h-12z" fill="#fcfcfc" stroke="#a8a8a8"/><path d="M8.5 0.5v4h4" fill="#f0f0f0" stroke="#a8a8a8"/></svg><span style="left:23px">Mesh_0032.rip</span><span style="left:100px;width:95px;text-align:right">671 KB</span><span style="left:207px">Файл "RIP"</span><span style="left:306px">14.09.2017 11:0...</span></div>
<div class="row" style="top:537px"><svg class="fi" width="13" height="16"><path d="M0.5 0.5h8l4 4v11h-12z" fill="#fcfcfc" stroke="#a8a8a8"/><path d="M8.5 0.5v4h4" fill="#f0f0f0" stroke="#a8a8a8"/></svg><span style="left:23px">Mesh_0033.rip</span><span style="left:100px;width:95px;text-align:right">17 KB</span><span style="left:207px">Файл "RIP"</span><span style="left:306px">14.09.2017 11:0...</span></div>
<div class="row" style="top:556px"><svg class="fi" width="13" height="16"><path d="M0.5 0.5h8l4 4v11h-12z" fill="#fcfcfc" stroke="#a8a8a8"/><path d="M8.5 0.5v4h4" fill="#f0f0f0" stroke="#a8a8a8"/></svg><span style="left:23px">Mesh_0034.rip</span><span style="left:100px;width:95px;text-align:right">25 KB</span><span style="left:207px">Файл "RIP"</span><span style="left:306px">14.09.2017 11:0...</span></div>
<div class="row" style="top:575px"><svg class="fi" width="13" height="16"><path d="M0.5 0.5h8l4 4v11h-12z" fill="#fcfcfc" stroke="#a8a8a8"/><path d="M8.5 0.5v4h4" fill="#f0f0f0" stroke="#a8a8a8"/></svg><span style="left:23px">Mesh_0035.rip</span><span style="left:100px;width:95px;text-align:right">4 KB</span><span style="left:207px">Файл "RIP"</span><span style="left:306px">14.09.2017 11:0...</span></div>
<div class="row" style="top:594px"><svg class="fi" width="13" height="16"><path d="M0.5 0.5h8l4 4v11h-12z" fill="#fcfcfc" stroke="#a8a8a8"/><path d="M8.5 0.5v4h4" fill="#f0f0f0" stroke="#a8a8a8"/></svg><span style="left:23px">Mesh_0036.rip</span><span style="left:100px;width:95px;text-align:right">9 KB</span><span style="left:207px">Файл "RIP"</span><span style="left:306px">14.09.2017 11:0...</span></div>
<div class="row" style="top:613px"><svg class="fi" width="13" height="16"><path d="M0.5 0.5h8l4 4v11h-12z" fill="#fcfcfc" stroke="#a8a8a8"/><path d="M8.5 0.5v4h4" fill="#f0f0f0" stroke="#a8a8a8"/></svg><span style="left:23px">Mesh_0037.rip</span><span style="left:100px;width:95px;text-align:right">9 KB</span><span style="left:207px">Файл "RIP"</span><span style="left:306px">14.09.2017 11:0...</span></div>
<div class="row" style="top:632px"><svg class="fi" width="13" height="16"><path d="M0.5 0.5h8l4 4v11h-12z" fill="#fcfcfc" stroke="#a8a8a8"/><path d="M8.5 0.5v4h4" fill="#f0f0f0" stroke="#a8a8a8"/></svg><span style="left:23px">Mesh_0038.rip</span><span style="left:100px;width:95px;text-align:right">41 KB</span><span style="left:207px">Файл "RIP"</span><span style="left:306px">14.09.2017 11:0...</span></div>
<div class="row" style="top:651px"><svg class="fi" width="13" height="16"><path d="M0.5 0.5h8l4 4v11h-12z" fill="#fcfcfc" stroke="#a8a8a8"/><path d="M8.5 0.5v4h4" fill="#f0f0f0" stroke="#a8a8a8"/></svg><span style="left:23px">Mesh_0039.rip</span><span style="left:100px;width:95px;text-align:right">41 KB</span><span style="left:207px">Файл "RIP"</span><span style="left:306px">14.09.2017 11:0...</span></div>
<div class="row" style="top:670px"><svg class="fi" width="13" height="16"><path d="M0.5 0.5h8l4 4v11h-12z" fill="#fcfcfc" stroke="#a8a8a8"/><path d="M8.5 0.5v4h4" fill="#f0f0f0" stroke="#a8a8a8"/></svg><span style="left:23px">Mesh_0040.rip</span><span style="left:100px;width:95px;text-align:right">42 KB</span><span style="left:207px">Файл "RIP"</span><span style="left:306px">14.09.2017 11:0...</span></div>
<div class="row" style="top:689px"><svg class="fi" width="13" height="16"><path d="M0.5 0.5h8l4 4v11h-12z" fill="#fcfcfc" stroke="#a8a8a8"/><path d="M8.5 0.5v4h4" fill="#f0f0f0" stroke="#a8a8a8"/></svg><span style="left:23px">Mesh_0041.rip</span><span style="left:100px;width:95px;text-align:right">41 KB</span><span style="left:207px">Файл "RIP"</span><span style="left:306px">14.09.2017 11:0...</span></div>
<div class="row" style="top:708px"><svg class="fi" width="13" height="16"><path d="M0.5 0.5h8l4 4v11h-12z" fill="#fcfcfc" stroke="#a8a8a8"/><path d="M8.5 0.5v4h4" fill="#f0f0f0" stroke="#a8a8a8"/></svg><span style="left:23px">Mesh_0042.rip</span><span style="left:100px;width:95px;text-align:right">41 KB</span><span style="left:207px">Файл "RIP"</span><span style="left:306px">14.09.2017 11:0...</span></div>
<div class="row" style="top:727px"><svg class="fi" width="13" height="16"><path d="M0.5 0.5h8l4 4v11h-12z" fill="#fcfcfc" stroke="#a8a8a8"/><path d="M8.5 0.5v4h4" fill="#f0f0f0" stroke="#a8a8a8"/></svg><span style="left:23px">Mesh_0043.rip</span><span style="left:100px;width:95px;text-align:right">41 KB</span><span style="left:207px">Файл "RIP"</span><span style="left:306px">14.09.2017 11:0...</span></div>
<div class="row" style="top:746px"><svg class="fi" width="13" height="16"><path d="M0.5 0.5h8l4 4v11h-12z" fill="#fcfcfc" stroke="#a8a8a8"/><path d="M8.5 0.5v4h4" fill="#f0f0f0" stroke="#a8a8a8"/></svg><span style="left:23px">Mesh_0044.rip</span><span style="left:100px;width:95px;text-align:right">41 KB</span><span style="left:207px">Файл "RIP"</span><span style="left:306px">14.09.2017 11:0...</span></div>
<div class="row" style="top:765px"><svg class="fi" width="13" height="16"><path d="M0.5 0.5h8l4 4v11h-12z" fill="#fcfcfc" stroke="#a8a8a8"/><path d="M8.5 0.5v4h4" fill="#f0f0f0" stroke="#a8a8a8"/></svg><span style="left:23px">Mesh_0045.rip</span><span style="left:100px;width:95px;text-align:right">12 KB</span><span style="left:207px">Файл "RIP"</span><span style="left:306px">14.09.2017 11:0...</span></div>
<div class="row" style="top:784px"><svg class="fi" width="13" height="16"><path d="M0.5 0.5h8l4 4v11h-12z" fill="#fcfcfc" stroke="#a8a8a8"/><path d="M8.5 0.5v4h4" fill="#f0f0f0" stroke="#a8a8a8"/></svg><span style="left:23px">Mesh_0046.rip</span><span style="left:100px;width:95px;text-align:right">12 KB</span><span style="left:207px">Файл "RIP"</span><span style="left:306px">14.09.2017 11:0...</span></div>
<div class="row" style="top:803px"><svg class="fi" width="13" height="16"><path d="M0.5 0.5h8l4 4v11h-12z" fill="#fcfcfc" stroke="#a8a8a8"/><path d="M8.5 0.5v4h4" fill="#f0f0f0" stroke="#a8a8a8"/></svg><span style="left:23px">Mesh_0047.rip</span><span style="left:100px;width:95px;text-align:right">12 KB</span><span style="left:207px">Файл "RIP"</span><span style="left:306px">14.09.2017 11:0...</span></div>
<div class="row" style="top:822px"><svg class="fi" width="13" height="16"><path d="M0.5 0.5h8l4 4v11h-12z" fill="#fcfcfc" stroke="#a8a8a8"/><path d="M8.5 0.5v4h4" fill="#f0f0f0" stroke="#a8a8a8"/></svg><span style="left:23px">Mesh_0048.rip</span><span style="left:100px;width:95px;text-align:right">12 KB</span><span style="left:207px">Файл "RIP"</span><span style="left:306px">14.09.2017 11:0...</span></div>
<div class="row" style="top:841px"><svg class="fi" width="13" height="16"><path d="M0.5 0.5h8l4 4v11h-12z" fill="#fcfcfc" stroke="#a8a8a8"/><path d="M8.5 0.5v4h4" fill="#f0f0f0" stroke="#a8a8a8"/></svg><span style="left:23px">Mesh_0049.rip</span><span style="left:100px;width:95px;text-align:right">12 KB</span><span style="left:207px">Файл "RIP"</span><span style="left:306px">14.09.2017 11:0...</span></div>
<div class="row" style="top:860px"><svg class="fi" width="13" height="16"><path d="M0.5 0.5h8l4 4v11h-12z" fill="#fcfcfc" stroke="#a8a8a8"/><path d="M8.5 0.5v4h4" fill="#f0f0f0" stroke="#a8a8a8"/></svg><span style="left:23px">Mesh_0050.rip</span><span style="left:100px;width:95px;text-align:right">12 KB</span><span style="left:207px">Файл "RIP"</span><span style="left:306px">14.09.2017 11:0...</span></div>
<div class="row" style="top:879px"><svg class="fi" width="13" height="16"><path d="M0.5 0.5h8l4 4v11h-12z" fill="#8ec0f4" stroke="#5a9ae0"/><path d="M8.5 0.5v4h4" fill="#c8e0fa" stroke="#5a9ae0"/></svg><span style="left:23px">Mesh_0051.rip</span><span style="left:100px;width:95px;text-align:right">409 KB</span><span style="left:207px">Файл "RIP"</span><span style="left:306px">14.09.2017 11:0...</span></div>
<div class="row" style="top:898px"><svg class="fi" width="13" height="16"><path d="M0.5 0.5h8l4 4v11h-12z" fill="#fcfcfc" stroke="#a8a8a8"/><path d="M8.5 0.5v4h4" fill="#f0f0f0" stroke="#a8a8a8"/></svg><span style="left:23px">Mesh_0052.rip</span><span style="left:100px;width:95px;text-align:right">11 KB</span><span style="left:207px">Файл "RIP"</span><span style="left:306px">14.09.2017 11:0...</span></div>
<div class="row" style="top:917px"><svg class="fi" width="13" height="16"><path d="M0.5 0.5h8l4 4v11h-12z" fill="#fcfcfc" stroke="#a8a8a8"/><path d="M8.5 0.5v4h4" fill="#f0f0f0" stroke="#a8a8a8"/></svg><span style="left:23px">Mesh_0053.rip</span><span style="left:100px;width:95px;text-align:right">9 KB</span><span style="left:207px">Файл "RIP"</span><span style="left:306px">14.09.2017 11:0...</span></div>
<div class="abs" style="left:419px;top:0;width:17px;height:927px;background:#efefef;border-left:1px solid #f4f4f4"></div>
<svg class="abs" style="left:423px;top:6px" width="8" height="5"><path d="M0 5L4 1L8 5z" fill="#404040"/></svg>
<svg class="abs" style="left:423px;top:914px" width="8" height="5"><path d="M0 0L4 4L8 0z" fill="#404040"/></svg>
<div class="abs" style="left:420px;top:22px;width:15px;height:31px;border:1px solid #959595;border-radius:2px;background:linear-gradient(90deg,#f0f0f0,#e2e2e2 50%,#d6d6d6 51%,#dcdcdc)"></div>
<div class="abs" style="left:424px;top:35px;width:7px;height:1px;background:#505050;box-shadow:0 2px #505050,0 4px #505050"></div>
</div>
<div class="abs" style="left:259px;top:979px;width:436px;height:2px;background:#7a7a7a"></div>
<div class="abs" style="left:263px;top:987px;width:24px;height:23px;border:1px solid #c8d4e0;background:linear-gradient(#e6eef8,#d8e2ee)"></div>
<svg class="abs" style="left:267px;top:990px" width="16" height="16"><path d="M12.5 5.5A5 5 0 1 0 13 10" fill="none" stroke="#1a6ad0" stroke-width="2.2"/><path d="M9 2l5 0-1 5z" fill="#1a6ad0"/></svg>
<div class="abs" style="left:290px;top:988px;width:262px;height:21px;border:1px solid #8a8a8a;border-radius:3px;background:linear-gradient(#f4f4f4,#e8e8e8 50%,#dcdcdc 51%,#e4e4e4)"></div>
<div class="abs" style="left:294px;top:992px;font-size:12px;letter-spacing:-0.75px">All Known Formats</div>
<svg class="abs" style="left:540px;top:995px" width="9" height="6"><path d="M0 0h9L4.5 5z" fill="#202020"/></svg>
<div class="abs" style="left:695px;top:45px;width:7px;height:972px;background:#fbfbfb;border-right:1px solid #6a6a6a"></div>
<div id="view" class="abs">
<svg class="abs" style="left:0;top:0" width="1212" height="972" id="grid"><path id="g" d="M-130529.8 16245.2L276.3 529.4M-126884.1 16243.8L291.0 529.7M-123238.5 16242.4L305.7 530.0M-119592.8 16240.9L320.6 530.3M-115947.1 16239.5L335.6 530.6M-112301.4 16238.1L350.8 530.9M-108655.7 16236.7L366.1 531.2M-105010.1 16235.3L381.5 531.5M-101364.4 16233.9L397.0 531.8M-97718.7 16232.4L412.6 532.2M-94073.0 16231.0L428.4 532.5M-90427.3 16229.6L444.4 532.8M-86781.7 16228.2L460.4 533.1M-83136.0 16226.8L476.6 533.5M-79490.3 16225.4L493.0 533.8M-75844.6 16223.9L509.5 534.1M-72198.9 16222.5L526.1 534.5M-68553.3 16221.1L542.9 534.8M-64907.6 16219.7L559.8 535.2M-61261.9 16218.3L576.9 535.5M-57616.2 16216.8L594.2 535.9M-53970.5 16215.4L611.6 536.2M-50324.9 16214.0L629.1 536.6M-46679.2 16212.6L646.8 536.9M-43033.5 16211.2L664.7 537.3M-39387.8 16209.8L682.7 537.7M-35742.1 16208.3L700.9 538.0M-32096.5 16206.9L719.3 538.4M-28450.8 16205.5L737.8 538.8M-24805.1 16204.1L756.5 539.2M-21159.4 16202.7L775.4 539.6M-17513.7 16201.3L794.4 539.9M-13868.1 16199.8L813.7 540.3M-10222.4 16198.4L833.1 540.7M-6576.7 16197.0L852.7 541.1M-2931.0 16195.6L872.5 541.5M714.7 16194.2L892.5 541.9M4360.3 16192.7L912.7 542.4M8006.0 16191.3L933.1 542.8M11651.7 16189.9L953.6 543.2M15297.4 16188.5L974.4 543.6M18943.1 16187.1L995.4 544.0M22588.7 16185.7L1016.6 544.5M26234.4 16184.2L1038.0 544.9M29880.1 16182.8L1059.6 545.4M33525.8 16181.4L1081.4 545.8M37171.5 16180.0L1103.5 546.2M40817.2 16178.6L1125.8 546.7M44462.8 16177.1L1148.3 547.2M48108.5 16175.7L1171.0 547.6M51754.2 16174.3L1194.0 548.1M55399.9 16172.9L1217.2 548.6M59045.6 16171.5L1240.7 549.0M62691.2 16170.1L1264.4 549.5M66336.9 16168.6L1288.3 550.0M69982.6 16167.2L1312.5 550.5M73628.3 16165.8L1337.0 551.0M77274.0 16164.4L1361.7 551.5M80919.6 16163.0L1386.7 552.0M84565.3 16161.6L1412.0 552.5M88211.0 16160.1L1437.5 553.1M91856.7 16158.7L1463.3 553.6M95502.4 16157.3L1489.4 554.1M99148.0 16155.9L1515.8 554.7M102793.7 16154.5L1542.5 555.2M106439.4 16153.0L1569.5 555.8M110085.1 16151.6L1596.7 556.3M113730.8 16150.2L1624.3 556.9M117376.4 16148.8L1652.2 557.4M121022.1 16147.4L1680.5 558.0M124667.8 16146.0L1709.0 558.6M128313.5 16144.5L1737.9 559.2M131959.2 16143.1L1767.1 559.8M-32312.4 4444.8L-118191.3 16240.4M-17428.3 2656.5L-104779.0 16235.2M-11757.6 1975.2L-91366.7 16230.0M-8767.5 1616.0L-77954.4 16224.8M-6920.6 1394.1L-64542.1 16219.5M-5666.5 1243.4L-51129.9 16214.3M-4759.3 1134.4L-37717.6 16209.1M-4072.6 1051.9L-24305.3 16203.9M-3534.6 987.2L-10893.0 16198.7M-3101.8 935.2L2519.3 16193.5M-2746.0 892.5L15931.5 16188.2M-2448.5 856.7L29343.8 16183.0M-2195.9 826.4L42756.1 16177.8M-1978.8 800.3L56168.4 16172.6M-1790.2 777.7L69580.7 16167.4M-1624.9 757.8L82992.9 16162.2M-1478.7 740.2L96405.2 16156.9M-1348.6 724.6L109817.5 16151.7M-1232.0 710.6L123229.8 16146.5M-1126.9 698.0L62641.3 7846.1M-1031.8 686.5L25447.7 3394.2M-945.2 676.1L16217.4 2289.4M-866.0 666.6L12030.7 1788.3M-793.4 657.9L9640.8 1502.2M-726.6 649.9L8095.4 1317.3M-664.8 642.4L7014.1 1187.8M-607.6 635.6L6215.1 1092.2M-554.4 629.2L5600.6 1018.6M-504.9 623.2L5113.3 960.3M-458.6 617.7L4717.5 912.9M-415.3 612.5L4389.5 873.7M-374.7 607.6L4113.4 840.6M-336.5 603.0L3877.7 812.4M-300.6 598.7L3674.1 788.0M-266.7 594.6L3496.5 766.8M-234.7 590.8L3340.3 748.1M-204.4 587.1L3201.7 731.5M-175.7 583.7L3078.0 716.7M-148.4 580.4L2966.9 703.4M-122.5 577.3L2866.6 691.4M-97.9 574.3L2775.5 680.5M-74.4 571.5L2692.4 670.5M-52.0 568.8L2616.4 661.4M-30.6 566.3L2546.5 653.1M-10.2 563.8L2482.1 645.4M9.3 561.4L2422.5 638.2M28.1 559.2L2367.2 631.6M46.0 557.0L2315.8 625.5M63.2 555.0L2267.9 619.7M79.7 553.0L2223.0 614.4M95.6 551.1L2181.0 609.3M110.9 549.2L2141.6 604.6M125.6 547.5L2104.5 600.2M139.8 545.8L2069.6 596.0M153.4 544.1L2036.6 592.0M166.6 542.6L2005.4 588.3M179.3 541.0L1975.9 584.8M191.5 539.6L1947.9 581.4M203.4 538.1L1921.3 578.2M214.8 536.8L1896.0 575.2M225.9 535.4L1872.0 572.3M236.7 534.1L1849.0 569.6M247.0 532.9L1827.2 567.0M257.1 531.7L1806.3 564.5M266.9 530.5L1786.3 562.1M276.3 529.4L1767.1 559.8" stroke="#fff" stroke-width="1" fill="none" shape-rendering="crispEdges"/><path d="M412.9 734.6C412.8 729.7 411.9 714.9 412.2 705.0C412.5 695.1 413.1 684.7 414.6 675.0C416.1 665.3 419.0 655.0 421.4 646.7C423.8 638.4 426.0 633.0 429.2 625.2C432.5 617.4 436.4 608.4 440.9 599.9C445.5 591.4 451.3 582.0 456.5 574.5C461.7 567.0 466.2 561.2 472.1 555.0C478.0 548.8 484.5 542.9 491.7 537.4C498.9 531.9 506.3 526.8 515.1 521.8C523.9 516.8 534.1 511.5 544.3 507.2C554.5 502.9 563.2 499.1 576.0 496.0C588.8 492.9 605.9 490.8 620.9 488.7C635.9 486.6 651.7 485.0 666.0 483.4C680.3 481.8 693.3 480.5 706.8 479.0C720.3 477.5 736.9 475.1 746.8 474.5C756.7 473.9 759.8 474.7 766.3 475.5C772.8 476.3 779.3 477.6 785.8 479.4C792.3 481.2 798.8 483.3 805.3 486.2C811.8 489.1 818.3 492.8 824.8 497.0C831.3 501.2 838.4 506.2 844.3 511.6C850.2 517.0 856.1 524.2 860.0 529.1C863.9 534.0 865.5 536.7 867.8 540.9C870.1 545.1 871.6 549.3 873.6 554.5C875.5 559.7 877.9 565.9 879.5 572.1C881.1 578.3 882.6 584.5 883.4 591.6C884.2 598.8 884.5 606.1 884.5 615.0C884.5 623.9 884.0 635.5 883.5 645.0C883.0 654.5 881.9 662.1 881.2 672.3C880.5 682.5 879.9 697.3 879.2 706.4C878.5 715.5 877.7 719.4 877.1 726.9C876.5 734.4 876.0 744.3 875.8 751.5C875.6 758.7 875.8 766.9 875.8 770.0L689.8 755.8L681.7 775.3L551.6 765.1L551.6 746.3z" fill="#000"/>
<polygon points="209.0,272.0 221.0,272.0 225.5,707.0 224.0,711.0 214.0,711.5 212.5,707.0" fill="#000"/>
<polygon points="175.0,304.0 203.0,305.0 210.0,307.0 221.0,310.0 235.5,310.5 235.5,317.5 221.0,317.0 210.0,314.0 203.0,312.0 175.0,311.0" fill="#000"/>
<rect x="191" y="292" width="2" height="13" fill="#000"/>
<path d="M201 306L211 323" stroke="#000" stroke-width="3"/>
<polygon points="220.0,335.0 225.0,338.0 227.0,342.0 222.0,344.0" fill="#000"/>
<path d="M222.0 321.3C225.0 325.1 233.9 336.3 240.0 344.0C246.1 351.7 252.5 360.3 258.8 367.5C265.1 374.7 271.2 380.7 278.0 387.0C284.8 393.3 291.5 399.2 299.5 405.5C307.5 411.8 316.9 418.6 326.0 425.0C335.1 431.4 344.7 438.5 353.9 443.6C363.1 448.7 372.0 451.9 381.0 455.5C390.0 459.1 397.9 462.5 408.2 465.3C418.5 468.1 431.7 470.5 443.0 472.5C454.3 474.5 463.9 476.5 476.2 477.6C488.5 478.7 505.9 479.2 517.0 479.0C528.1 478.8 534.0 477.7 543.0 476.5C552.0 475.3 561.8 473.6 571.0 472.0C580.2 470.4 588.9 468.8 598.0 467.0C607.1 465.2 615.6 463.4 625.6 461.2C635.6 459.0 646.9 456.5 658.0 454.0C669.1 451.5 686.3 447.6 692.0 446.3" fill="none" stroke="#000" stroke-width="1.1"/>
<rect x="510" y="568" width="2" height="2" fill="#fff"/>
<rect x="512.5" y="566" width="2" height="1" fill="#fff"/>
<rect x="555.5" y="570" width="1.5" height="1.5" fill="#fff"/>
<rect x="616" y="539.5" width="1.5" height="1.5" fill="#fff"/>
<rect x="620" y="535.5" width="1.5" height="2" fill="#fff"/>
<rect x="607" y="553" width="3" height="1" fill="#fff"/>
<rect x="697" y="417.3" width="3" height="63" fill="#000"/>
<path d="M681 464C684 449 692 445 698.5 445.2C708 445.5 719 455 719.7 478" fill="none" stroke="#000" stroke-width="2.4"/>
<path d="M691.8 448Q699 448 703 451Q716 458 717.5 478" fill="none" stroke="#000" stroke-width="1"/>
<path d="M696.5999999999999 419Q688 429 689.5999999999999 437Q690 443 691.8 446" fill="none" stroke="#000" stroke-width="0.9" stroke-dasharray="1.5 1"/>
<path d="M719.7 465Q723 475 726 475Q728 474 729.3 472.6" fill="none" stroke="#000" stroke-width="0.9"/>
<rect x="663.9000000000001" y="467.79999999999995" width="28.9" height="8.6" rx="2.5" fill="#000"/><rect x="673" y="475" width="11.8" height="8" fill="#000"/><rect x="672.5" y="463" width="12.8" height="6" rx="2.5" fill="#000"/>
<rect x="722.9000000000001" y="465.1" width="22" height="7" rx="2.5" fill="#000"/><rect x="729.3" y="471" width="9.7" height="6" fill="#000"/><rect x="728.3" y="461.9" width="10.7" height="4.5" rx="2" fill="#000"/><defs><clipPath id="cp"><polygon points="598.3,621.0 623.0,605.3 666.1,605.3 666.1,721.0 598.3,721.0"/><polygon points="412.9,720.7 551.6,730.6 551.6,746.6 412.9,736.1"/><polygon points="682.0,739.8 875.8,753.6 875.8,771.1 682.0,756.4"/><polygon points="551.6,749.6 676.0,759.0 689.8,757.7 681.7,775.8 551.6,765.6"/><polygon points="211.0,694.0 227.0,692.5 227.0,713.0 211.0,713.0"/></clipPath></defs><g clip-path="url(#cp)"><path d="M-130529.8 16245.2L276.3 529.4M-126884.1 16243.8L291.0 529.7M-123238.5 16242.4L305.7 530.0M-119592.8 16240.9L320.6 530.3M-115947.1 16239.5L335.6 530.6M-112301.4 16238.1L350.8 530.9M-108655.7 16236.7L366.1 531.2M-105010.1 16235.3L381.5 531.5M-101364.4 16233.9L397.0 531.8M-97718.7 16232.4L412.6 532.2M-94073.0 16231.0L428.4 532.5M-90427.3 16229.6L444.4 532.8M-86781.7 16228.2L460.4 533.1M-83136.0 16226.8L476.6 533.5M-79490.3 16225.4L493.0 533.8M-75844.6 16223.9L509.5 534.1M-72198.9 16222.5L526.1 534.5M-68553.3 16221.1L542.9 534.8M-64907.6 16219.7L559.8 535.2M-61261.9 16218.3L576.9 535.5M-57616.2 16216.8L594.2 535.9M-53970.5 16215.4L611.6 536.2M-50324.9 16214.0L629.1 536.6M-46679.2 16212.6L646.8 536.9M-43033.5 16211.2L664.7 537.3M-39387.8 16209.8L682.7 537.7M-35742.1 16208.3L700.9 538.0M-32096.5 16206.9L719.3 538.4M-28450.8 16205.5L737.8 538.8M-24805.1 16204.1L756.5 539.2M-21159.4 16202.7L775.4 539.6M-17513.7 16201.3L794.4 539.9M-13868.1 16199.8L813.7 540.3M-10222.4 16198.4L833.1 540.7M-6576.7 16197.0L852.7 541.1M-2931.0 16195.6L872.5 541.5M714.7 16194.2L892.5 541.9M4360.3 16192.7L912.7 542.4M8006.0 16191.3L933.1 542.8M11651.7 16189.9L953.6 543.2M15297.4 16188.5L974.4 543.6M18943.1 16187.1L995.4 544.0M22588.7 16185.7L1016.6 544.5M26234.4 16184.2L1038.0 544.9M29880.1 16182.8L1059.6 545.4M33525.8 16181.4L1081.4 545.8M37171.5 16180.0L1103.5 546.2M40817.2 16178.6L1125.8 546.7M44462.8 16177.1L1148.3 547.2M48108.5 16175.7L1171.0 547.6M51754.2 16174.3L1194.0 548.1M55399.9 16172.9L1217.2 548.6M59045.6 16171.5L1240.7 549.0M62691.2 16170.1L1264.4 549.5M66336.9 16168.6L1288.3 550.0M69982.6 16167.2L1312.5 550.5M73628.3 16165.8L1337.0 551.0M77274.0 16164.4L1361.7 551.5M80919.6 16163.0L1386.7 552.0M84565.3 16161.6L1412.0 552.5M88211.0 16160.1L1437.5 553.1M91856.7 16158.7L1463.3 553.6M95502.4 16157.3L1489.4 554.1M99148.0 16155.9L1515.8 554.7M102793.7 16154.5L1542.5 555.2M106439.4 16153.0L1569.5 555.8M110085.1 16151.6L1596.7 556.3M113730.8 16150.2L1624.3 556.9M117376.4 16148.8L1652.2 557.4M121022.1 16147.4L1680.5 558.0M124667.8 16146.0L1709.0 558.6M128313.5 16144.5L1737.9 559.2M131959.2 16143.1L1767.1 559.8M-32312.4 4444.8L-118191.3 16240.4M-17428.3 2656.5L-104779.0 16235.2M-11757.6 1975.2L-91366.7 16230.0M-8767.5 1616.0L-77954.4 16224.8M-6920.6 1394.1L-64542.1 16219.5M-5666.5 1243.4L-51129.9 16214.3M-4759.3 1134.4L-37717.6 16209.1M-4072.6 1051.9L-24305.3 16203.9M-3534.6 987.2L-10893.0 16198.7M-3101.8 935.2L2519.3 16193.5M-2746.0 892.5L15931.5 16188.2M-2448.5 856.7L29343.8 16183.0M-2195.9 826.4L42756.1 16177.8M-1978.8 800.3L56168.4 16172.6M-1790.2 777.7L69580.7 16167.4M-1624.9 757.8L82992.9 16162.2M-1478.7 740.2L96405.2 16156.9M-1348.6 724.6L109817.5 16151.7M-1232.0 710.6L123229.8 16146.5M-1126.9 698.0L62641.3 7846.1M-1031.8 686.5L25447.7 3394.2M-945.2 676.1L16217.4 2289.4M-866.0 666.6L12030.7 1788.3M-793.4 657.9L9640.8 1502.2M-726.6 649.9L8095.4 1317.3M-664.8 642.4L7014.1 1187.8M-607.6 635.6L6215.1 1092.2M-554.4 629.2L5600.6 1018.6M-504.9 623.2L5113.3 960.3M-458.6 617.7L4717.5 912.9M-415.3 612.5L4389.5 873.7M-374.7 607.6L4113.4 840.6M-336.5 603.0L3877.7 812.4M-300.6 598.7L3674.1 788.0M-266.7 594.6L3496.5 766.8M-234.7 590.8L3340.3 748.1M-204.4 587.1L3201.7 731.5M-175.7 583.7L3078.0 716.7M-148.4 580.4L2966.9 703.4M-122.5 577.3L2866.6 691.4M-97.9 574.3L2775.5 680.5M-74.4 571.5L2692.4 670.5M-52.0 568.8L2616.4 661.4M-30.6 566.3L2546.5 653.1M-10.2 563.8L2482.1 645.4M9.3 561.4L2422.5 638.2M28.1 559.2L2367.2 631.6M46.0 557.0L2315.8 625.5M63.2 555.0L2267.9 619.7M79.7 553.0L2223.0 614.4M95.6 551.1L2181.0 609.3M110.9 549.2L2141.6 604.6M125.6 547.5L2104.5 600.2M139.8 545.8L2069.6 596.0M153.4 544.1L2036.6 592.0M166.6 542.6L2005.4 588.3M179.3 541.0L1975.9 584.8M191.5 539.6L1947.9 581.4M203.4 538.1L1921.3 578.2M214.8 536.8L1896.0 575.2M225.9 535.4L1872.0 572.3M236.7 534.1L1849.0 569.6M247.0 532.9L1827.2 567.0M257.1 531.7L1806.3 564.5M266.9 530.5L1786.3 562.1M276.3 529.4L1767.1 559.8" stroke="#fff" stroke-width="1" fill="none" shape-rendering="crispEdges"/></g></svg>
<div class="abs" style="left:-1px;top:0;width:1px;height:972px;background:#6a6a6a"></div>
<div style="font-size:12px;line-height:15px;position:absolute;white-space:nowrap;left:3px;top:4px;color:#00e000">Mesh_0051.rip - 1/1</div>
<div style="font-size:12px;line-height:15px;position:absolute;white-space:nowrap;left:3px;top:34px;color:#f0f000">F1:</div><div style="font-size:12px;line-height:15px;position:absolute;white-space:nowrap;left:35px;top:34px;color:#f0f0f0;letter-spacing:0.15px">Toggle info text</div>
<div style="font-size:12px;line-height:15px;position:absolute;white-space:nowrap;left:3px;top:49px;color:#f0f000">F3:</div><div style="font-size:12px;line-height:15px;position:absolute;white-space:nowrap;left:35px;top:49px;color:#f0f0f0;letter-spacing:0.15px">Change base orientation</div>
<div style="font-size:12px;line-height:15px;position:absolute;white-space:nowrap;left:3px;top:64px;color:#f0f000">F4:</div><div style="font-size:12px;line-height:15px;position:absolute;white-space:nowrap;left:35px;top:64px;color:#f0f0f0;letter-spacing:0.15px">Toggle face cull</div>
<div style="font-size:12px;line-height:15px;position:absolute;white-space:nowrap;left:3px;top:79px;color:#f0f000">F5:</div><div style="font-size:12px;line-height:15px;position:absolute;white-space:nowrap;left:35px;top:79px;color:#f0f0f0;letter-spacing:0.15px">Toggle shading</div>
<div style="font-size:12px;line-height:15px;position:absolute;white-space:nowrap;left:3px;top:94px;color:#f0f000">F11:</div><div style="font-size:12px;line-height:15px;position:absolute;white-space:nowrap;left:35px;top:94px;color:#f0f0f0;letter-spacing:0.15px">Cycle blend</div>
<div style="font-size:12px;line-height:15px;position:absolute;white-space:nowrap;left:3px;top:109px;color:#f0f000">F12:</div><div style="font-size:12px;line-height:15px;position:absolute;white-space:nowrap;left:35px;top:109px;color:#f0f0f0;letter-spacing:0.15px">Reset view</div>
<svg class="abs" style="left:0px;top:932px" width="202" height="41" viewBox="0 932 202 41"><defs>
<linearGradient id="bbg" x1="0" y1="0" x2="0" y2="1"><stop offset="0" stop-color="#ececec"/><stop offset="1" stop-color="#dedede"/></linearGradient>
<radialGradient id="gold" cx="0.6" cy="0.38" r="0.65"><stop offset="0" stop-color="#fff890"/><stop offset="0.45" stop-color="#c8a840"/><stop offset="0.85" stop-color="#6a5210"/><stop offset="1" stop-color="#201800"/></radialGradient>
<radialGradient id="blue" cx="0.62" cy="0.35" r="0.7"><stop offset="0" stop-color="#a0b8ff"/><stop offset="0.5" stop-color="#4060c0"/><stop offset="1" stop-color="#101850"/></radialGradient>
<radialGradient id="red" cx="0.5" cy="0.3" r="0.8"><stop offset="0" stop-color="#ff2020"/><stop offset="0.7" stop-color="#e00000"/><stop offset="1" stop-color="#700000"/></radialGradient>
<linearGradient id="pink" x1="0" y1="0" x2="1" y2="0"><stop offset="0" stop-color="#c06080"/><stop offset="0.4" stop-color="#ffb0d0"/><stop offset="1" stop-color="#502030"/></linearGradient>
</defs><rect x="1" y="932" width="40" height="40" fill="url(#bbg)"/><path d="M1 972V956Q21.0 942 41 956V972z" fill="#d2d2d2" opacity="0.8"/><rect x="40" y="932" width="1" height="40" fill="#8a8a8a"/><rect x="41" y="932" width="40" height="40" fill="url(#bbg)"/><path d="M41 972V956Q61.0 942 81 956V972z" fill="#d2d2d2" opacity="0.8"/><rect x="80" y="932" width="1" height="40" fill="#8a8a8a"/><rect x="81" y="932" width="40" height="40" fill="url(#bbg)"/><path d="M81 972V956Q101.0 942 121 956V972z" fill="#d2d2d2" opacity="0.8"/><rect x="120" y="932" width="1" height="40" fill="#8a8a8a"/><rect x="121" y="932" width="40" height="40" fill="url(#bbg)"/><path d="M121 972V956Q141.0 942 161 956V972z" fill="#d2d2d2" opacity="0.8"/><rect x="160" y="932" width="1" height="40" fill="#8a8a8a"/><rect x="161" y="932" width="40" height="40" fill="url(#bbg)"/><path d="M161 972V956Q181.0 942 201 956V972z" fill="#d2d2d2" opacity="0.8"/><rect x="200" y="932" width="1" height="40" fill="#8a8a8a"/><rect x="1" y="971" width="200" height="1" fill="#8a8a8a"/><rect x="0" y="932" width="1" height="41" fill="#707070"/><circle cx="21.5" cy="940.5" r="3.6" fill="#3030e0"/><path d="M15 948H25V964H28V967H16V964H18V950.5H15.5z" fill="#3a3af0"/><path d="M48.5 962.5V945" stroke="#2020d0" stroke-width="1.3"/><path d="M48.5 962.5L63 954.5" stroke="#20a020" stroke-width="1.3"/><path d="M48.5 962.5L69 967.5" stroke="#e02020" stroke-width="1.3"/><text x="48.5" y="941.5" font-size="7" font-weight="bold" fill="#2020c0" font-family="Liberation Sans">z</text><text x="64" y="951" font-size="8" font-weight="bold" fill="#30a030" font-family="Liberation Sans">y</text><text x="69" y="964" font-size="7" font-weight="bold" fill="#d02020" font-family="Liberation Sans">x</text><path d="M84.5 958Q85 938 100.5 937.5Q116 938 117 958z" fill="url(#red)"/><ellipse cx="100.79999999999995" cy="959" rx="16" ry="4.5" fill="url(#pink)"/><circle cx="141.5" cy="952" r="14.2" fill="url(#gold)"/><circle cx="178.5" cy="950.5" r="11.5" fill="url(#blue)"/><path d="M174 972L182 960L191 961L186 972z" fill="#707070"/><path d="M182 959L186 938L190 937L195 940L192 959z" fill="#c8a880" opacity="0.85"/></svg>
</div>
<div class="abs" style="left:0;top:1017px;width:1914px;height:8px;background:#f0f0f0"></div>
<div class="abs" style="left:1262px;top:1017px;width:652px;height:2px;background:#fafafa"></div>
<div class="abs" style="left:1270px;top:1021px;width:126px;height:4px;border:1px solid #b8b8b8;border-bottom:none"></div>
<div class="abs" style="left:1397px;top:1021px;width:130px;height:4px;border:1px solid #b8b8b8;border-bottom:none"></div>
<div class="abs" style="left:1528px;top:1021px;width:130px;height:4px;border:1px solid #b8b8b8;border-bottom:none"></div>
<div class="abs" style="left:1659px;top:1021px;width:131px;height:4px;border:1px solid #b8b8b8;border-bottom:none"></div>
<div class="abs" style="left:1791px;top:1021px;width:123px;height:4px;border:1px solid #b8b8b8;border-bottom:none"></div>
</body></html>
